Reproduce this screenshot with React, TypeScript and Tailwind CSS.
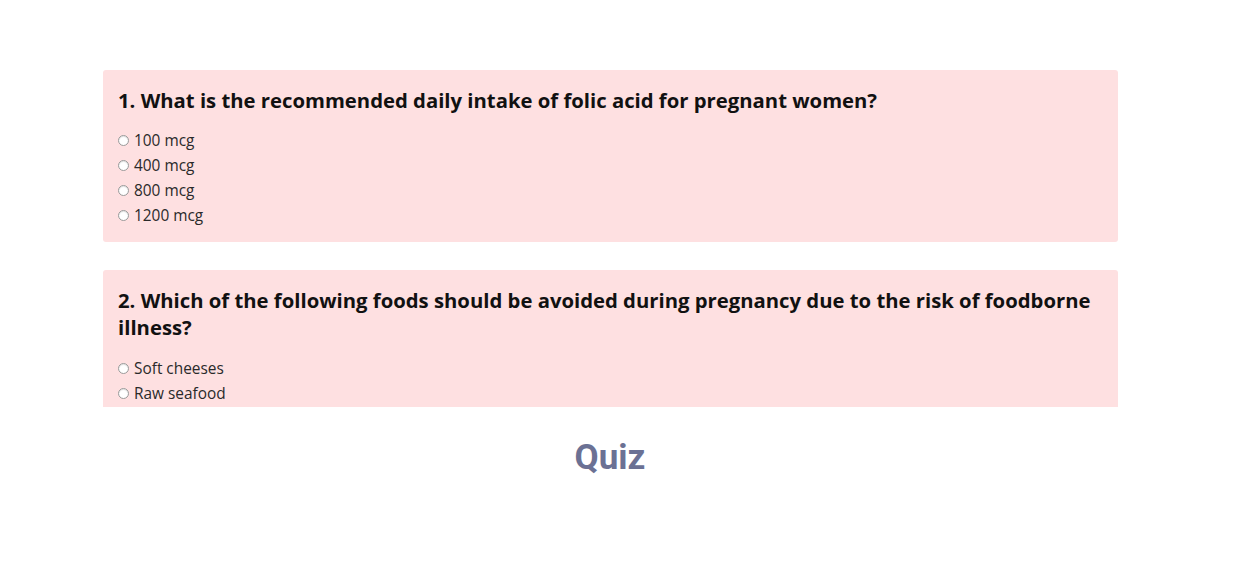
import React from "react";

const questions = [
  {
    q: "1. What is the recommended daily intake of folic acid for pregnant women?",
    options: ["100 mcg", "400 mcg", "800 mcg", "1200 mcg"],
    gap: "mt-[14px]",
  },
  {
    q: "2. Which of the following foods should be avoided during pregnancy due to the risk of foodborne illness?",
    options: ["Soft cheeses", "Raw seafood", "Deli meats", "All of the above"],
    gap: "mt-[15px]",
  },
];

export default function App() {
  return (
    <div className="w-[1237px] h-[576px] bg-white overflow-hidden">
      <div className="w-[1220px]">
        <div className="pt-[70px] px-[103px]">
          <div
            className="h-[337px] w-[1015px] overflow-hidden flex flex-col gap-[28px]"
            style={{ fontFamily: '"Open Sans", sans-serif' }}
          >
            {questions.map((item, i) => (
              <div key={i} className="bg-[#fee0e1] rounded-[3px] pt-[17px] pb-[14px] px-[15px]">
                <h2 className="text-[20.3px] font-bold leading-[27px] text-[#111]">{item.q}</h2>
                <div className={`${item.gap} flex flex-col`}>
                  {item.options.map((o) => (
                    <label key={o} className="flex items-center h-[25px] text-[15.4px] text-[#2a2a2a]">
                      <span className="w-[11px] h-[11px] rounded-full border border-[#9a9a9a] bg-white mr-[5px] shadow-[inset_0_1px_1px_rgba(0,0,0,0.12)]" />
                      {o}
                    </label>
                  ))}
                </div>
              </div>
            ))}
          </div>
        </div>
        <h1
          className="mt-[31px] text-center text-[35px] font-bold leading-[40px] text-[#6b7194]"
          style={{ fontFamily: "Roboto, sans-serif" }}
        >
          Quiz
        </h1>
      </div>
    </div>
  );
}
